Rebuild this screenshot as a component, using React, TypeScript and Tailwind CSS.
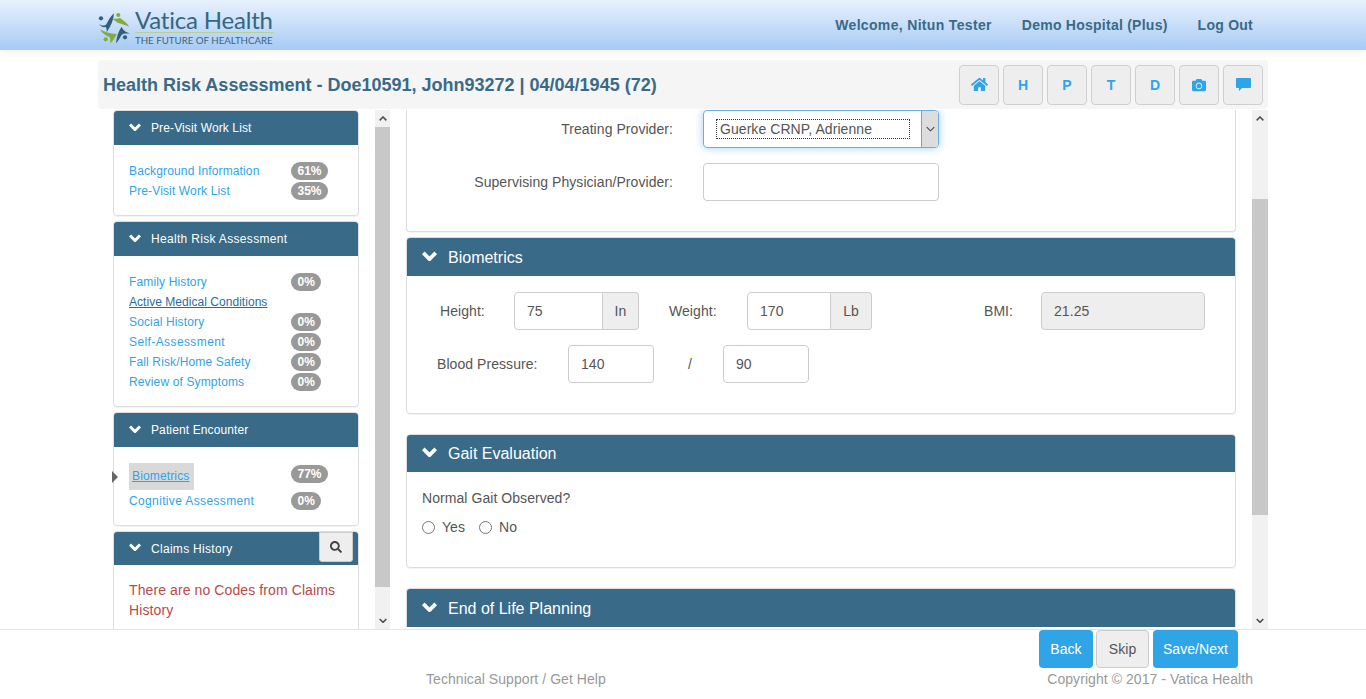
import { FaCamera, FaHome, FaSearch } from "react-icons/fa";

const sans = "font-['Liberation_Sans',Arial,sans-serif]";

function Chevron({ width, up, stroke = 3, className }: { width: number; up?: boolean; stroke?: number; className?: string }) {
  return (
    <svg width={width} height={(width * 2) / 3} viewBox="0 0 12 8" fill="none" className={className} aria-hidden>
      <path d={up ? "M1 6.5 6 1.5l5 5" : "M1 1.5l5 5 5-5"} stroke="currentColor" strokeWidth={stroke} />
    </svg>
  );
}

function Logo() {
  return (
    <div className="-ml-[3px] flex h-full items-start">
      <svg width="40" height="40" viewBox="0 0 40 40" className="mt-2 shrink-0" aria-hidden>
        <circle cx="5" cy="10.3" r="2.1" fill="#2f5f7c" />
        <path d="M3 16C6 18 9 18 10.5 16 12.5 12 15 8 18 5.3 17.5 12 15 18 10.7 24.3 11 21.5 10.5 20 9.5 19 7 19.5 4.5 18.5 3 16Z" fill="#2f5f7c" />
        <circle cx="22.3" cy="7" r="2.1" fill="#84ab3e" />
        <path d="M16 10.5C19 11 22 10.5 24 10 27 12 31 15 33.3 18.7 29 17 25 15.5 22 15 20 13.5 18 12 16 10.5Z" fill="#84ab3e" />
        <circle cx="9.7" cy="31.3" r="2.1" fill="#84ab3e" />
        <path d="M4 21.3C8 24 14 25.5 20.7 26 19 30 17 33 14 35.3 14.5 32.5 14.5 30.5 13.5 29 9.5 28 6 25 4 21.3Z" fill="#84ab3e" />
        <circle cx="29" cy="29.3" r="2.1" fill="#2f5f7c" />
        <path d="M20 35.3C20.5 29 22.5 23 25.7 18.7 26.5 21.5 29 24 34 25.3 30 25.5 27 25.5 25.5 27 24 30 22 33 20 35.3Z" fill="#2f5f7c" />
      </svg>
      <div className="mt-[7px] -ml-px flex w-[139px] flex-col">
        <span className="font-['Lato',sans-serif] text-[24px] leading-[25px] tracking-[-0.2px] whitespace-nowrap text-[#35677f]">Vatica Health</span>
        <span className="border-t border-[#b9cf98] pt-[2px] font-['Lato',sans-serif] text-[9.7px] leading-[11px] tracking-normal whitespace-nowrap text-[#35677f]">THE FUTURE OF HEALTHCARE</span>
      </div>
    </div>
  );
}

function ToolButton({ children }: { children: React.ReactNode }) {
  return (
    <button className="flex h-10 w-10 items-center justify-center rounded border border-[#cfcfcf] bg-[#eeeeee] text-sm font-bold text-[#2fa4e7]">
      {children}
    </button>
  );
}

function ScrollBar({ thumbTop, thumbHeight, width }: { thumbTop: number; thumbHeight: number; width: string }) {
  return (
    <div className={`relative flex shrink-0 flex-col justify-between bg-[#f1f1f1] text-[#505050] ${width}`}>
      <div className="flex h-[17px] items-center justify-center"><Chevron width={8} up stroke={2.4} /></div>
      <div className="absolute inset-x-0 bg-[#c8c8c8]" style={{ top: thumbTop, height: thumbHeight }} />
      <div className="flex h-[17px] items-center justify-center"><Chevron width={8} stroke={2.4} /></div>
    </div>
  );
}

function SideHeader({ title, track = "tracking-[0.12px]", height = "h-[34px]", children }: { title: string; track?: string; height?: string; children?: React.ReactNode }) {
  return (
    <div className={`relative flex items-center rounded-t-[3px] bg-[#396a87] pl-[15px] text-xs text-white ${height}`}>
      <Chevron width={12} className="mb-[3px]" />
      <span className={`ml-[10px] ${track}`}>{title}</span>
      {children}
    </div>
  );
}

function Row({ label, pct, active, track = "tracking-[0.14px]" }: { label: string; pct?: string; active?: boolean; track?: string }) {
  return (
    <div className="flex h-5 items-center">
      <a className={`w-[162px] text-xs whitespace-nowrap ${track} ${active ? "text-[#1f6f9e] underline" : "text-[#2fa4e7]"}`}>{label}</a>
      {pct && <Badge pct={pct} />}
    </div>
  );
}

function Badge({ pct }: { pct: string }) {
  return (
    <span className="flex h-[18px] items-center rounded-[9px] bg-[#999999] px-[6.5px] text-xs font-bold tracking-normal text-white">{pct}</span>
  );
}

function MainHeader({ title, height = "h-[38px] pt-px" }: { title: string; height?: string }) {
  return (
    <div className={`flex items-center rounded-t-[3px] bg-[#396a87] pl-[15px] text-base tracking-normal text-white ${height}`}>
      <Chevron width={15} className="mb-[3px]" />
      <span className="ml-[11px]">{title}</span>
    </div>
  );
}

function Field({ value, className }: { value: string; className: string }) {
  return (
    <input
      readOnly
      defaultValue={value}
      className={`h-[38px] rounded border border-[#cccccc] px-3 text-sm text-[#555555] outline-none ${className}`}
    />
  );
}

function InputGroup({ value, unit, inputWidth, unitWidth }: { value: string; unit: string; inputWidth: string; unitWidth: string }) {
  return (
    <div className="flex h-[38px] w-[125px]">
      <input
        readOnly
        defaultValue={value}
        className={`h-[38px] rounded-l border border-[#cccccc] px-3 text-sm text-[#555555] outline-none ${inputWidth}`}
      />
      <span className={`flex items-center justify-center rounded-r border border-l-0 border-[#cccccc] bg-[#eeeeee] text-sm text-[#555555] ${unitWidth}`}>{unit}</span>
    </div>
  );
}

export default function App() {
  return (
    <div className={`flex h-[699px] flex-col overflow-hidden bg-white tracking-[0.06px] text-[#555555] ${sans}`}>
      <header className="flex h-[50px] shrink-0 items-center justify-between bg-gradient-to-b from-[#e8f2fe] to-[#a8caf4] pr-[113px] pl-[99px] shadow-[0_2px_8px_rgba(0,0,0,0.06)]">
        <Logo />
        <nav className="flex gap-[30px] text-sm font-bold tracking-[0.25px] text-[#396a87]">
          <a className="tracking-[0.33px]">Welcome, Nitun Tester</a>
          <a>Demo Hospital (Plus)</a>
          <a>Log Out</a>
        </nav>
      </header>

      <div className="mx-[98px] mt-[10px] flex h-[49px] shrink-0 items-center justify-between rounded bg-[#f5f5f5] pr-[5px] pl-[5px]">
        <h1 className="text-lg font-bold tracking-normal text-[#396a87]">Health Risk Assessment - Doe10591, John93272 | 04/04/1945 (72)</h1>
        <div className="flex gap-1">
          <ToolButton><FaHome size={17} /></ToolButton>
          <ToolButton>H</ToolButton>
          <ToolButton>P</ToolButton>
          <ToolButton>T</ToolButton>
          <ToolButton>D</ToolButton>
          <ToolButton><FaCamera size={14} /></ToolButton>
          <ToolButton>
            <svg width="15" height="14" viewBox="0 0 15 14" fill="currentColor" aria-hidden>
              <path d="M1 0h13a1 1 0 0 1 1 1v8a1 1 0 0 1-1 1H6l-3 3v-3H1a1 1 0 0 1-1-1V1a1 1 0 0 1 1-1z" />
            </svg>
          </ToolButton>
        </div>
      </div>

      <div className="mx-[98px] mt-px flex h-[519px] shrink-0">
        {/* left menu */}
        <div className="relative flex w-[292px] shrink-0">
          <div className="flex w-[277px] flex-col gap-[5px] overflow-hidden pr-4 pl-[15px]">
            <section className="shrink-0 rounded border border-[#dddddd] shadow-[0_1px_1px_rgba(0,0,0,0.05)]">
              <SideHeader title="Pre-Visit Work List" />
              <div className="pt-4 pr-0 pb-[14px] pl-[15px]">
                <Row label="Background Information" pct="61%" />
                <Row label="Pre-Visit Work List" pct="35%" />
              </div>
            </section>
            <section className="shrink-0 rounded border border-[#dddddd] shadow-[0_1px_1px_rgba(0,0,0,0.05)]">
              <SideHeader title="Health Risk Assessment" track="tracking-[0.32px]" />
              <div className="pt-4 pb-[14px] pl-[15px]">
                <Row label="Family History" pct="0%" />
                <Row label="Active Medical Conditions" active track="tracking-[0.04px]" />
                <Row label="Social History" pct="0%" />
                <Row label="Self-Assessment" pct="0%" track="tracking-[0.4px]" />
                <Row label="Fall Risk/Home Safety" pct="0%" />
                <Row label="Review of Symptoms" pct="0%" />
              </div>
            </section>
            <section className="relative h-[114px] shrink-0 rounded border border-[#dddddd] shadow-[0_1px_1px_rgba(0,0,0,0.05)]">
              <SideHeader title="Patient Encounter" />
              <span className="absolute top-[58px] -left-[2px] h-0 w-0 border-y-[6px] border-l-[6px] border-y-transparent border-l-[#666666]" />
              <div className="pt-4 pl-[15px]">
                <div className="flex h-[27px] items-start">
                  <a className="mr-[97px] flex h-[27px] w-[65px] items-center bg-[#d9d9d9] px-[3px] pb-px text-xs tracking-[0.14px] text-[#2fa4e7] underline">Biometrics</a>
                  <span className="mt-[2px]"><Badge pct="77%" /></span>
                </div>
                <div className="mt-px flex h-5 items-center">
                  <a className="w-[162px] text-xs tracking-[0.36px] whitespace-nowrap text-[#2fa4e7]">Cognitive Assessment</a>
                  <Badge pct="0%" />
                </div>
              </div>
            </section>
            <section className="shrink-0 rounded border border-[#dddddd]">
              <SideHeader title="Claims History" track="tracking-[0.3px]" height="h-[33px]">
                <button className="absolute top-0 right-[5px] flex h-[30px] w-[34px] items-center justify-center rounded-b-[3px] border border-[#cccccc] bg-[#eeeeee] text-[#444444]">
                  <FaSearch size={12} />
                </button>
              </SideHeader>
              <p className="px-[15px] pt-[15px] pb-5 text-sm leading-5 tracking-[0.1px] text-[#b94a48]">There are no Codes from Claims History</p>
            </section>
          </div>
          <ScrollBar thumbTop={17} thumbHeight={460} width="w-[15px]" />
        </div>

        {/* main form */}
        <div className="flex min-w-0 flex-1">
          <div className="w-[862px] overflow-hidden pr-4 pl-4">
            <section className="flex h-[122px] flex-col gap-[15px] rounded-b border border-t-0 border-[#dddddd] shadow-[0_1px_1px_rgba(0,0,0,0.05)]">
              <div className="flex items-center">
                <label className="w-[266px] text-right text-sm">Treating Provider:</label>
                <div className="ml-[30px] flex h-[38px] w-[236px] items-center rounded border border-[#66afe9] pl-3 text-sm shadow-[0_0_8px_rgba(102,175,233,0.6)]">
                  <span className="flex h-5 w-[194px] items-center border border-dotted border-[#333333] pl-[3px]">Guerke CRNP, Adrienne</span>
                  <span className="ml-auto flex h-full w-[17px] items-center justify-center rounded-r-[3px] border-l border-[#999999] bg-[#dddddd] text-[#444444]">
                    <Chevron width={9} stroke={1.4} />
                  </span>
                </div>
              </div>
              <div className="flex items-center">
                <label className="w-[266px] text-right text-sm whitespace-nowrap">Supervising Physician/Provider:</label>
                <Field value="" className="ml-[30px] w-[236px]" />
              </div>
            </section>

            <section className="mt-[5px] h-[177px] rounded border border-[#dddddd] shadow-[0_1px_1px_rgba(0,0,0,0.05)]">
              <MainHeader title="Biometrics" />
              <div className="mt-4 flex items-center text-sm">
                <label className="ml-[33px] w-[74px]">Height:</label>
                <InputGroup value="75" unit="In" inputWidth="w-[89px]" unitWidth="w-9" />
                <label className="ml-[30px] w-[78px]">Weight:</label>
                <InputGroup value="170" unit="Lb" inputWidth="w-[84px]" unitWidth="w-[41px]" />
                <label className="ml-[112px] w-[57px]">BMI:</label>
                <Field value="21.25" className="w-[164px] bg-[#eeeeee]" />
              </div>
              <div className="mt-[15px] flex items-center text-sm">
                <label className="ml-[30px] w-[131px]">Blood Pressure:</label>
                <Field value="140" className="w-[86px]" />
                <span className="w-[69px] pl-[3px] text-center">/</span>
                <Field value="90" className="w-[86px]" />
              </div>
            </section>

            <section className="mt-5 h-[134px] rounded border border-[#dddddd] shadow-[0_1px_1px_rgba(0,0,0,0.05)]">
              <MainHeader title="Gait Evaluation" height="h-[37px]" />
              <div className="pt-4 pl-[15px] text-sm">
                <p className="leading-5">Normal Gait Observed?</p>
                <div className="mt-[9px] flex items-center">
                  <label className="flex items-center"><input type="radio" name="gait" className="m-0 h-[13px] w-[13px]" /><span className="ml-[7px]">Yes</span></label>
                  <label className="ml-[14px] flex items-center"><input type="radio" name="gait" className="m-0 h-[13px] w-[13px]" /><span className="ml-[7px]">No</span></label>
                </div>
              </div>
            </section>

            <section className="mt-5 rounded-t border border-b-0 border-[#dddddd]">
              <MainHeader title="End of Life Planning" />
            </section>
          </div>
          <ScrollBar thumbTop={89} thumbHeight={316} width="w-4" />
        </div>
      </div>

      <footer className="relative z-10 flex-1 border-t border-[#e5e5e5] bg-white text-sm">
        <div className="flex justify-end gap-[3px] pr-[128px]">
          <button className="h-[38px] w-[54px] rounded bg-[#2fa4e7] text-white">Back</button>
          <button className="h-[38px] w-[53px] rounded border border-[#cccccc] bg-[#eeeeee] text-[#555555]">Skip</button>
          <button className="ml-px h-[38px] w-[85px] rounded bg-[#2fa4e7] text-white">Save/Next</button>
        </div>
        <div className="mt-px flex justify-between pr-[113px] pl-[426px] leading-5 text-[#999999]">
          <a>Technical Support / Get Help</a>
          <span>Copyright © 2017 - Vatica Health</span>
        </div>
      </footer>
    </div>
  );
}
